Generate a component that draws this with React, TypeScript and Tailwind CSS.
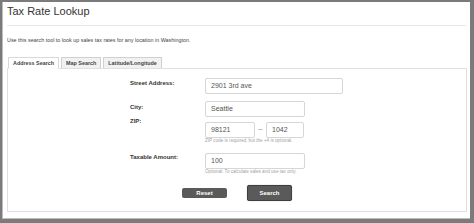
const tabs = ["Address Search", "Map Search", "Latitude/Longitude"];

const Field = ({ value, width }: { value: string; width: string }) => (
  <div
    className={`${width} flex h-[16px] items-center rounded-[2px] border border-[#d6d6d6] bg-white pl-[5px] text-[7px] text-[#555]`}
  >
    {value}
  </div>
);

const Label = ({ text, top }: { text: string; top: string }) => (
  <div className={`${top} w-[75px] shrink-0 text-[6px] font-bold leading-[8px] text-[#333]`}>
    {text}
  </div>
);

const Hint = ({ text }: { text: string }) => (
  <div className="ml-[75px] text-[4.6px] leading-[6px] text-[#a3a3a3]">{text}</div>
);

export default function App() {
  return (
    <div
      className="h-[223px] w-[474px] bg-[#7b7b7b] pb-[4px] pl-[2px] pr-[4px] pt-[2px]"
      style={{ fontFamily: '"Liberation Sans", Arial, sans-serif' }}
    >
      <div className="flex h-full flex-col border-b border-l border-[#bdbdbd] bg-white pl-[4px] pr-[3px]">
        {/* Header */}
        <h1 className="mt-[3px] text-[11px] leading-[13px] text-[#333]">Tax Rate Lookup</h1>
        <div className="mr-[1px] mt-[7px] h-px bg-[#e8e8e8]" />
        <p className="mt-[11px] text-[5.4px] leading-[7px] text-[#444]">
          Use this search tool to look up sales tax rates for any location in Washington.
        </p>

        {/* Tabs */}
        <div className="mt-[13px] flex gap-[2px] pl-[1px]">
          {tabs.map((t, i) => (
            <div
              key={t}
              className={
                i === 0
                  ? "relative z-10 -mb-px flex h-[12px] items-center border border-b-white border-[#d9d9d9] bg-white px-[4px] text-[5.4px] font-bold text-[#444]"
                  : "flex h-[11px] items-center border border-b-0 border-[#d0d0d0] bg-[#f1f1f1] px-[4px] text-[5.4px] font-bold text-[#444]"
              }
            >
              {t}
            </div>
          ))}
        </div>

        {/* Panel */}
        <div className="flex flex-col border border-[#e0e0e0] pb-[10px] pl-[122px] pt-[9px]">
          <div className="flex">
            <Label text="Street Address:" top="mt-[1px]" />
            <Field value="2901 3rd ave" width="w-[138px]" />
          </div>

          <div className="mt-[7px] flex">
            <Label text="City:" top="mt-[2px]" />
            <Field value="Seattle" width="w-[100px]" />
          </div>

          <div className="mt-[5px] flex">
            <Label text="ZIP:" top="-mt-[5px]" />
            <Field value="98121" width="w-[50px]" />
            <span className="w-[11px] text-center text-[7px] leading-[14px] text-[#888]">–</span>
            <Field value="1042" width="w-[38px]" />
          </div>
          <Hint text="ZIP code is required, but the +4 is optional." />

          <div className="mt-[9px] flex">
            <Label text="Taxable Amount:" top="mt-[0px]" />
            <Field value="100" width="w-[100px]" />
          </div>
          <Hint text="Optional: To calculate sales and use tax only." />

          {/* Buttons */}
          <div className="-ml-[122px] mt-[10px] flex items-center justify-center gap-[20px]">
            <button className="flex h-[10px] w-[45px] items-center justify-center rounded-[2px] bg-[#5a5a5a] text-[6px] font-bold text-white">
              Reset
            </button>
            <button className="flex h-[16px] w-[45px] items-center justify-center rounded-[2px] border border-[#3f3f3f] bg-[#5a5a5a] text-[6px] font-bold text-white shadow-[0_0_1px_#888]">
              Search
            </button>
          </div>
        </div>
      </div>
    </div>
  );
}
